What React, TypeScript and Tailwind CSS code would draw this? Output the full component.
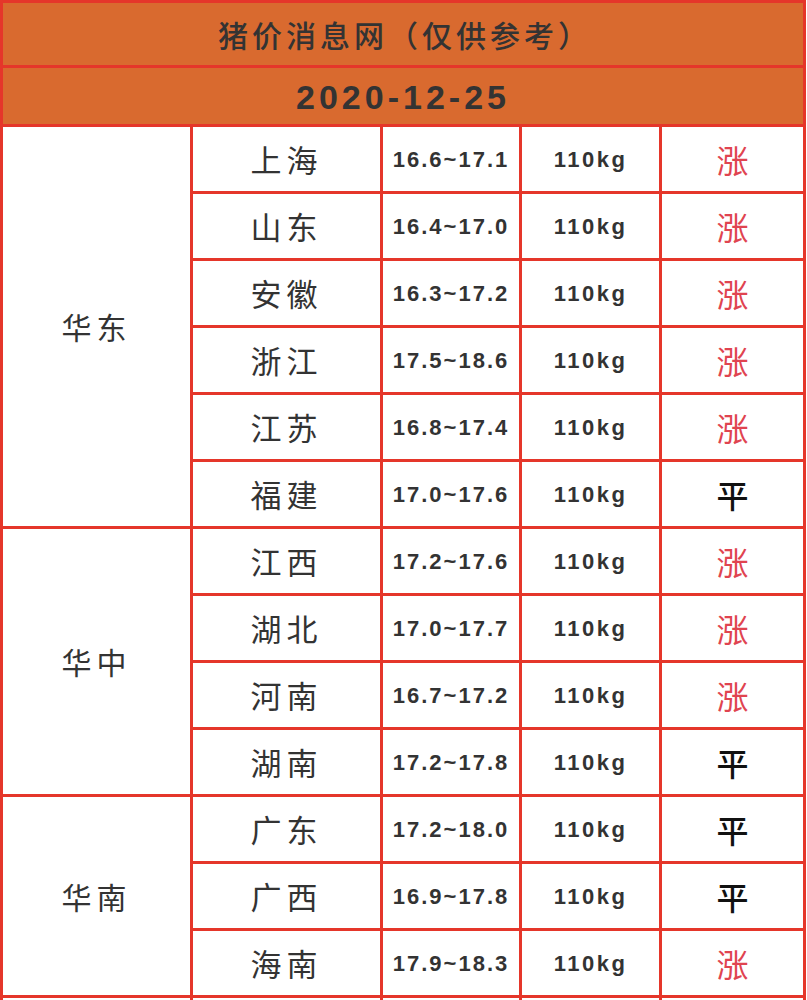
const cjk = "font-['Noto_Sans_CJK_SC','Noto_Sans',sans-serif]";
const num = "font-['Liberation_Sans','Noto_Sans_CJK_SC',sans-serif]";

interface Row {
  city: string;
  price: string;
  trend: "涨" | "平";
}

interface Region {
  name: string;
  span: string;
  rows: Row[];
}

const regions: Region[] = [
  {
    name: "华东",
    span: "row-span-6",
    rows: [
      { city: "上海", price: "16.6~17.1", trend: "涨" },
      { city: "山东", price: "16.4~17.0", trend: "涨" },
      { city: "安徽", price: "16.3~17.2", trend: "涨" },
      { city: "浙江", price: "17.5~18.6", trend: "涨" },
      { city: "江苏", price: "16.8~17.4", trend: "涨" },
      { city: "福建", price: "17.0~17.6", trend: "平" },
    ],
  },
  {
    name: "华中",
    span: "row-span-4",
    rows: [
      { city: "江西", price: "17.2~17.6", trend: "涨" },
      { city: "湖北", price: "17.0~17.7", trend: "涨" },
      { city: "河南", price: "16.7~17.2", trend: "涨" },
      { city: "湖南", price: "17.2~17.8", trend: "平" },
    ],
  },
  {
    name: "华南",
    span: "row-span-3",
    rows: [
      { city: "广东", price: "17.2~18.0", trend: "平" },
      { city: "广西", price: "16.9~17.8", trend: "平" },
      { city: "海南", price: "17.9~18.3", trend: "涨" },
    ],
  },
];

const cell = "bg-white flex items-center justify-center";

export default function App() {
  return (
    <div className="w-[807px] bg-white">
      <div className="w-[806px] bg-[#e5362a] p-[3px] grid grid-cols-[187px_187px_136px_137px_141px] grid-rows-[62px_56px] auto-rows-[64px] gap-[3px]">
        {/* Title */}
        <div
          className={`col-span-5 bg-[#d96a2f] flex items-center justify-center text-[30px] font-medium tracking-[4px] pl-[4px] text-[#333] ${cjk}`}
        >
          猪价消息网（仅供参考）
        </div>
        <div
          className={`col-span-5 bg-[#d96a2f] flex items-center justify-center text-[34px] font-bold tracking-[4px] text-[#333] pt-[2px] ${num}`}
        >
          2020-12-25
        </div>

        {regions.map((region) => (
          <Group key={region.name} region={region} />
        ))}

        {/* next block, cut off by the frame */}
        <div className="col-start-1 bg-white" />
        <div className="bg-white" />
        <div className="bg-white" />
        <div className="bg-white" />
        <div className="bg-white" />
      </div>
    </div>
  );
}

function Group({ region }: { region: Region }) {
  return (
    <>
      <div
        className={`${region.span} col-start-1 ${cell} text-[30px] tracking-[5px] text-[#333] ${cjk}`}
      >
        {region.name}
      </div>
      {region.rows.map((r) => (
        <Cells key={r.city} row={r} />
      ))}
    </>
  );
}

function Cells({ row }: { row: Row }) {
  return (
    <>
      <div className={`${cell} text-[31px] tracking-[5px] text-[#333] ${cjk}`}>
        {row.city}
      </div>
      <div className={`${cell} text-[22px] font-bold tracking-[2px] text-[#333] ${num}`}>
        {row.price}
      </div>
      <div className={`${cell} text-[22px] font-bold tracking-[2.5px] text-[#333] ${num}`}>
        110kg
      </div>
      <div
        className={`${cell} text-[32px] ${cjk} ${
          row.trend === "涨" ? "text-[#e04450]" : "text-[#111] font-medium"
        }`}
      >
        {row.trend}
      </div>
    </>
  );
}
